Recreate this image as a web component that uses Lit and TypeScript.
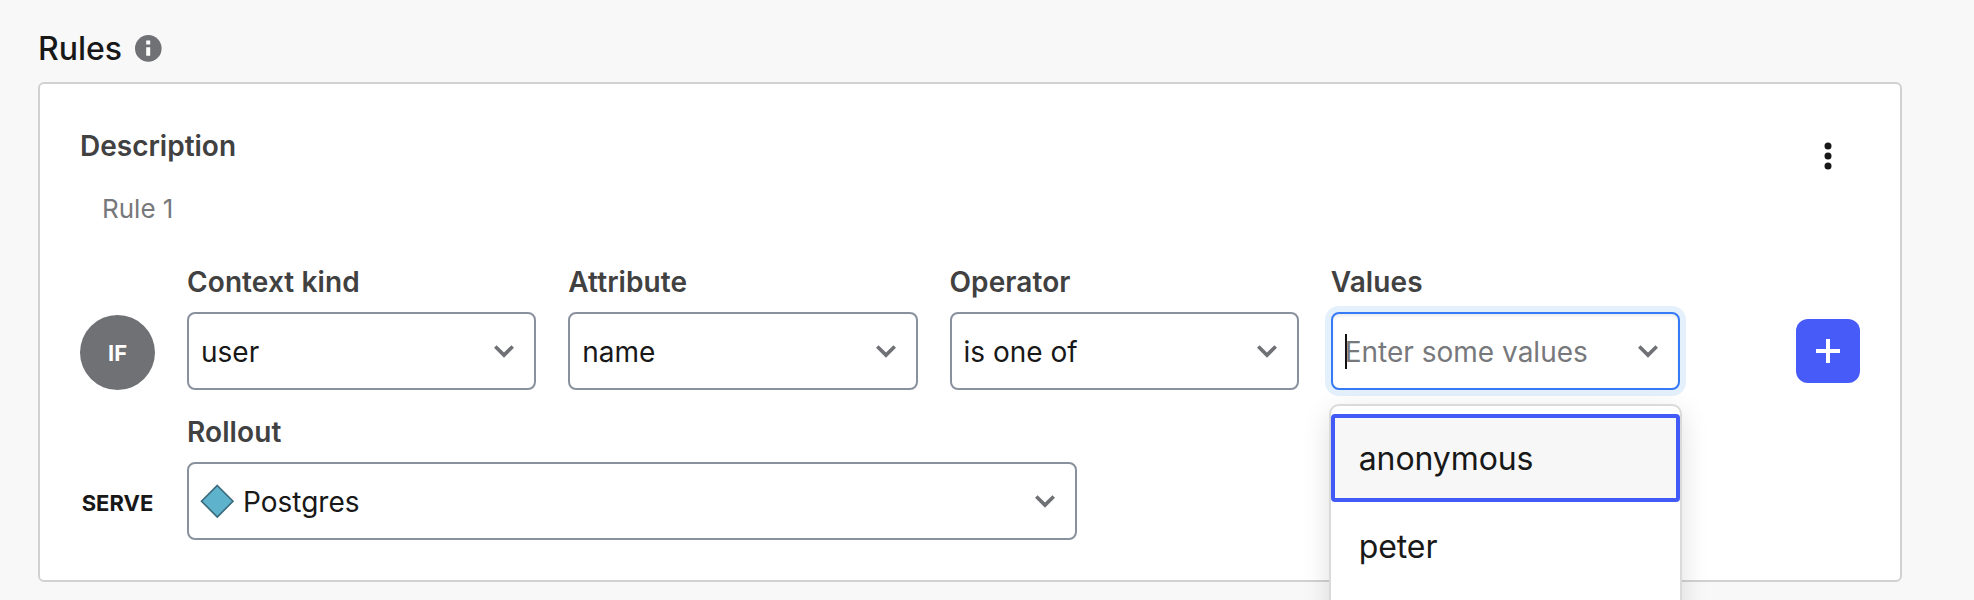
import { LitElement, html, css, nothing } from "lit";
import { customElement, property } from "lit/decorators.js";

@customElement("select-field")
class SelectField extends LitElement {
  @property() label = "";
  @property() value = "";
  @property() placeholder = "";
  @property({ type: Boolean }) active = false;
  @property({ type: Boolean }) swatch = false;
  @property({ attribute: false }) options: string[] = [];

  static styles = css`
    :host { display: block; position: relative; min-width: 0; }
    .label { font-size: 28px; font-weight: 600; line-height: 34px; color: #414141; letter-spacing: 0.1px; margin-bottom: 13px; white-space: nowrap; }
    .box { box-sizing: border-box; height: 78px; border: 2px solid #8a919e; border-radius: 8px; background: #fff; padding: 0 19px 0 12px; display: flex; align-items: center; }
    .box.active { border-color: #357af6; box-shadow: 0 0 0 6px #e5f0fd, inset 0 2px 3px rgba(0, 0, 0, 0.08); }
    .text { flex: 1; font-size: 28px; line-height: 34px; padding-top: 2px; color: #181818; white-space: nowrap; }
    .placeholder { color: #77787b; }
    .caret { width: 2px; height: 35px; background: #111; margin-right: -2px; }
    .swatch { margin: 0 8px 0 -1px; flex: none; }
    .chevron { flex: none; }
    .menu { position: absolute; z-index: 2; top: 139px; left: -2px; right: -2px; box-sizing: border-box; height: 300px; background: #fff; border: 2px solid #dadada; border-radius: 10px; padding-top: 8px; box-shadow: 0 8px 28px rgba(0, 0, 0, 0.13); }
    .option { box-sizing: border-box; height: 88px; padding: 2px 0 0 28px; display: flex; align-items: center; font-size: 32px; line-height: 40px; letter-spacing: -0.1px; color: #181818; }
    .option.focused { background: #f7f7f7; border: 4px solid #425af8; border-radius: 4px; padding-left: 24px; }
  `;

  render() {
    return html`
      <div class="label">${this.label}</div>
      <div class="box ${this.active ? "active" : ""}">
        ${this.active ? html`<span class="caret"></span>` : nothing}
        ${this.swatch
          ? html`<svg class="swatch" width="35" height="35" viewBox="0 0 35 35"><path d="M17.3 1.5 33 17.3 17.3 33 1.5 17.3Z" fill="#5fb2cc" stroke="#39697c" stroke-width="1.6" /></svg>`
          : nothing}
        <span class="text ${this.value ? "" : "placeholder"}">${this.value || this.placeholder}</span>
        <svg class="chevron" width="22" height="14" viewBox="0 0 22 14"><path d="M2.3 2.4 11 11.1 19.7 2.4" fill="none" stroke="#6f7175" stroke-width="3.6" /></svg>
      </div>
      ${this.options.length
        ? html`<div class="menu">${this.options.map((o, i) => html`<div class="option ${i === 0 ? "focused" : ""}">${o}</div>`)}</div>`
        : nothing}
    `;
  }
}

@customElement("app-root")
class AppRoot extends LitElement {
  static styles = css`
    :host { display: block; box-sizing: border-box; height: 600px; overflow: hidden; background: #f8f8f8; padding: 28px 72px 0 38px; font-family: Inter, sans-serif; }
    .header { display: flex; align-items: center; gap: 13px; height: 54px; box-sizing: border-box; padding-bottom: 14px; }
    .title { margin: 0; padding-top: 2px; font-size: 32px; font-weight: 500; line-height: 40px; color: #181818; }
    .card { box-sizing: border-box; height: 500px; background: #fff; border: 2px solid #d1d1d1; border-radius: 6px; padding: 45px 40px 0; }
    .top { display: flex; justify-content: space-between; height: 136px; }
    .heading { font-size: 28px; font-weight: 600; line-height: 34px; color: #414141; }
    .name { font-size: 26px; line-height: 32px; color: #77787b; margin: 30px 0 0 22px; }
    .more { margin: 9px 22px 0 0; }
    .row { display: grid; grid-template-columns: 75px 1493px 148px; column-gap: 32px; justify-content: start; align-items: end; }
    .row + .row { margin-top: 25px; }
    .fields { display: grid; grid-template-columns: repeat(4, 1fr); gap: 32px; }
    .rollout { width: 890px; }
    .badge, .serve { height: 75px; display: flex; align-items: center; justify-content: center; font-size: 22px; font-weight: 700; }
    .badge { border-radius: 50%; background: #6f7175; color: #fff; }
    .serve { color: #181818; }
    .add { justify-self: end; width: 64px; height: 64px; margin: 0 0 7px; padding: 0; border: 0; border-radius: 12px; background: #465bf8; display: flex; align-items: center; justify-content: center; }
  `;

  render() {
    return html`
      <div class="header">
        <h1 class="title">Rules</h1>
        <svg width="27" height="27" viewBox="0 0 27 27">
          <circle cx="13.3" cy="13.4" r="13.3" fill="#6f7175" />
          <path d="M11.2 5.5h4v4h-4zM11.2 12.3h4v8.5h-4z" fill="#fff" />
        </svg>
      </div>
      <div class="card">
        <div class="top">
          <div>
            <div class="heading">Description</div>
            <div class="name">Rule 1</div>
          </div>
          <svg class="more" width="20" height="36" viewBox="0 0 20 36" fill="#181818">
            <circle cx="10" cy="8" r="3.5" /><circle cx="10" cy="18" r="3.5" /><circle cx="10" cy="28" r="3.5" />
          </svg>
        </div>
        <div class="row">
          <div class="badge">IF</div>
          <div class="fields">
            <select-field label="Context kind" value="user"></select-field>
            <select-field label="Attribute" value="name"></select-field>
            <select-field label="Operator" value="is one of"></select-field>
            <select-field label="Values" placeholder="Enter some values" active .options=${["anonymous", "peter"]}></select-field>
          </div>
          <button class="add" aria-label="Add">
            <svg width="24" height="24" viewBox="0 0 24 24"><path d="M12 0v24M0 12h24" stroke="#fff" stroke-width="4" /></svg>
          </button>
        </div>
        <div class="row">
          <div class="serve">SERVE</div>
          <select-field class="rollout" label="Rollout" value="Postgres" swatch></select-field>
        </div>
      </div>
    `;
  }
}
